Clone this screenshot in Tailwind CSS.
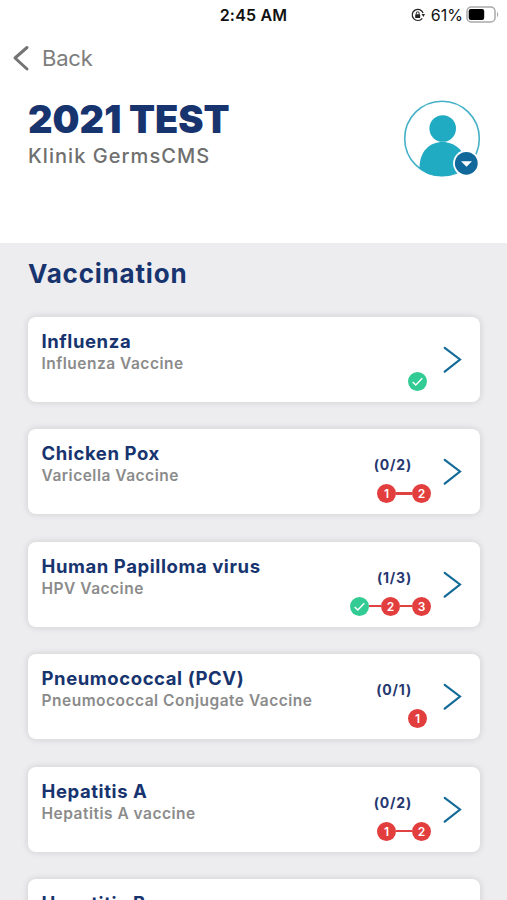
<!DOCTYPE html>
<html lang="en">
    <head>
        <meta charset="UTF-8">
        <meta name="viewport" content="width=device-width, initial-scale=1">
        <title>Vaccination</title>
        <script src="https://cdn.jsdelivr.net/npm/@tailwindcss/browser@4"></script>
    </head>
    <body class="h-[900px] overflow-hidden bg-[#ededef] font-['Inter',sans-serif]">
        <header class="h-[243px] bg-white">
            <!-- status bar -->
            <div class="h-[30px] grid grid-cols-3 items-center pr-[8px] text-[#111]">
                <span></span>
                <span class="text-center text-[16px] font-semibold tracking-[0.2px] whitespace-nowrap pl-[8px]">2:45 AM</span>
                <div class="flex items-center justify-end">
                    <svg class="w-[14px] h-[14px]" viewBox="0 0 14 14" fill="none">
                        <path d="M11.300 10.300A5.600 5.600 0 1 1 12.100 5" stroke="#222" stroke-width="1.200"/>
                        <path d="M10.600 6h3.400l-1.600 3z" fill="#222"/>
                        <rect x="4.200" y="6.300" width="5" height="3.800" rx=".6" fill="#222"/>
                        <path d="M5.300 6.500V5.200a1.400 1.400 0 0 1 2.800 0v1.300" stroke="#222" stroke-width="1"/>
                    </svg>
                    <span class="ml-[6px] text-[16px]">61%</span>
                    <svg class="ml-[3px] mb-[1px] w-[33px] h-[17px]" viewBox="0 0 33 17" fill="none">
                        <rect x="1" y="1" width="28" height="15" rx="4.300" stroke="#a9a9a9" stroke-width="1.500"/>
                        <rect x="2.700" y="3" width="15.500" height="11" rx="2.200" fill="#000"/>
                        <path d="M31 6v5c1.600-.5 1.600-4.500 0-5z" fill="#a9a9a9"/>
                    </svg>
                </div>
            </div>

            <a class="mt-[12px] ml-[12px] h-[32px] w-fit flex items-center text-[#7d7d7d]">
                <svg class="w-[18px] h-[28px]" viewBox="0 0 18 28" fill="none" stroke="#747474" stroke-width="3" stroke-linecap="round" stroke-linejoin="round">
                    <path d="M15 3.500L3 14L15 25"/>
                </svg>
                <span class="ml-[12px] text-[22px] tracking-[-0.2px]">Back</span>
            </a>

            <div class="flex justify-between pl-[28px] pr-[26px] mt-[25px]">
                <div>
                    <h1 class="w-fit text-[38px] leading-[40px] font-black text-[#17346f] whitespace-nowrap">2021 TEST</h1>
                    <p class="w-fit mt-[4px] text-[20px] leading-[26px] font-medium tracking-[1.05px] text-[#6f6f6f] whitespace-nowrap">Klinik GermsCMS</p>
                </div>
                <svg class="w-[78px] h-[80px]" viewBox="403 99 78 80" fill="none">
                    <circle cx="442" cy="138.500" r="37.300" stroke="#45b1c8" stroke-width="1.600"/>
                    <circle cx="442.700" cy="128.500" r="13.300" fill="#21abc3"/>
                    <path d="M419.500 168C419.500 151 430 142 442.500 142S466 151 466 166C460 172.500 451 176.200 442 176.200S425 173.500 419.500 168z" fill="#21abc3"/>
                    <circle cx="466.300" cy="163.300" r="13.200" fill="#fff"/>
                    <circle cx="466.300" cy="163.300" r="11.400" fill="#10699a"/>
                    <path d="M461 161.300h11l-5.500 5.500z" fill="#fff"/>
                </svg>
            </div>
        </header>

        <main class="pl-[28px] pr-[27px]">
            <h2 class="w-fit pt-[14px] text-[26px] leading-[34px] font-bold tracking-[0.8px] text-[#17346f]">Vaccination</h2>
            <div id="vaccineList" class="mt-[25.5px] flex flex-col gap-[27.5px]"></div>
        </main>
    </body>
<script>
    // steps: "ok" is a dose already given, a number is a dose still due
    const vaccines = [
        { name: "Influenza", sub: "Influenza Vaccine", count: "", steps: ["ok"] },
        { name: "Chicken Pox", sub: "Varicella Vaccine", count: "(0/2)", steps: [1, 2] },
        { name: "Human Papilloma virus", sub: "HPV Vaccine", count: "(1/3)", steps: ["ok", 2, 3] },
        { name: "Pneumococcal (PCV)", sub: "Pneumococcal Conjugate Vaccine", count: "(0/1)", steps: [1] },
        { name: "Hepatitis A", sub: "Hepatitis A vaccine", count: "(0/2)", steps: [1, 2] },
        { name: "Hepatitis B", sub: "", count: "", steps: [] },
    ];

    function stepsHtml(steps){
        const lines = {
            2: `<span class="w-[16px] h-[2.5px] bg-[#e04141]"></span>`,
            3: `<span class="w-[12px] h-[2.5px] bg-[#e04141]"></span>`,
        };
        return steps.map(step => step === "ok"
            ? `<svg class="w-[19px] h-[19px]" viewBox="0 0 19 19" fill="none">
                <circle cx="9.500" cy="9.500" r="9.500" fill="#33cb94"/>
                <path d="M4.700 10L7.800 13L14.300 6.300" stroke="#fff" stroke-width="1.500"/>
            </svg>`
            : `<span class="w-[19px] h-[19px] rounded-full bg-[#e23e3e] text-white text-[12px] leading-[19px] font-semibold text-center">${step}</span>`
        ).join(lines[steps.length] || "");
    }

    document.getElementById("vaccineList").innerHTML = vaccines.map(v => `
        <div class="h-[85px] shrink-0 flex justify-between rounded-[8px] bg-white pl-[13.5px] pr-[18px] shadow-[0_0_6px_1px_rgba(0,0,0,0.11)]">
            <div class="pt-[12px] whitespace-nowrap">
                <h3 class="w-fit text-[18.5px] leading-[24px] font-bold tracking-[0.58px] text-[#17346f]">${v.name}</h3>
                <p class="w-fit mt-[1px] text-[15.5px] leading-[20px] font-semibold tracking-[0.5px] text-[#8b8b8b]">${v.sub}</p>
            </div>
            <div class="flex">
                <div class="flex flex-col items-end pt-[26px]">
                    <p class="h-[20px] pr-[19px] text-[14px] leading-[20px] font-bold tracking-[0.8px] text-[#26386f]">${v.count}</p>
                    <div class="mt-[9px] flex items-center ${v.steps.length === 1 ? "pr-[4px]" : ""}">${stepsHtml(v.steps)}</div>
                </div>
                <svg class="ml-[11px] mt-[28px] w-[20px] h-[29px]" viewBox="0 0 20 29" fill="none" stroke="#146b98" stroke-width="2.200" stroke-linecap="round">
                    <path d="M2.700 2.800L18 14.500L2.700 26.700"/>
                </svg>
            </div>
        </div>`).join("");
</script>
</html>
